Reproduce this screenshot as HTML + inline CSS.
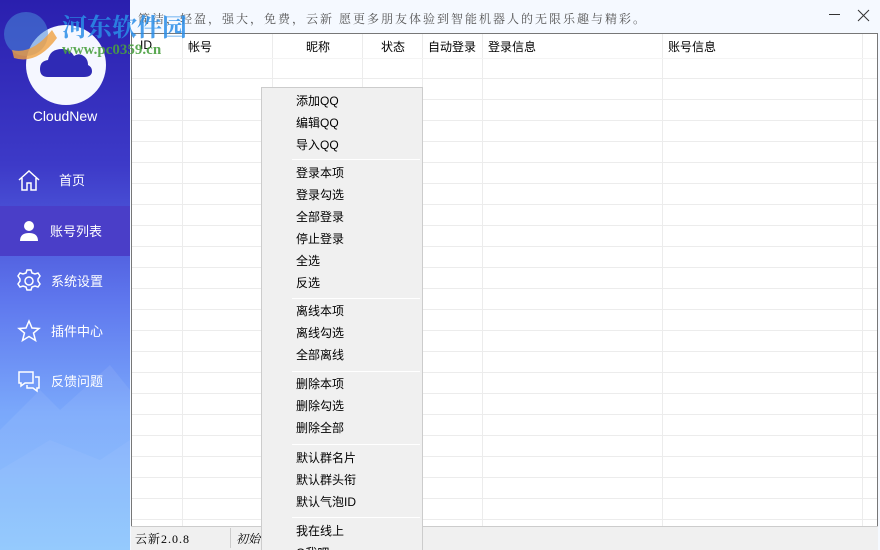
<!DOCTYPE html>
<html style="width:880px;height:550px;overflow:hidden"><head><meta charset="utf-8"><style>
*{margin:0;padding:0;box-sizing:border-box}
body{width:880px;height:550px;overflow:hidden;position:relative;background:#f5f9ff;font-family:"Liberation Sans","Noto Sans CJK SC",sans-serif;font-size:12px;color:#000}
.side{position:absolute;left:0;top:0;width:130px;height:550px;background:linear-gradient(180deg,#2a1fae 0%,#3d3ac8 30%,#5f78ee 55%,#7aa8fb 75%,#88c4fd 100%);overflow:hidden}
.nav{position:absolute;left:0;width:130px;height:50px;color:#fff;font-size:13px}
.nav span{position:absolute;left:52px;top:15px}
.nav svg{position:absolute;left:17px;top:13px}
.a{position:absolute}
.tbl{position:absolute;left:131px;top:33px;width:747px;height:493px;border:1px solid #777;border-bottom:none;background:#fff;overflow:hidden}
.vl{position:absolute;top:0;width:1px;height:493px;background:#ececec}
.hl{position:absolute;left:0;width:747px;height:1px;background:#ececec}
.th{position:absolute;top:4px;font-size:12px}
.menu{position:absolute;left:261px;top:87px;width:162px;height:463px;background:#f0f0f0;border:1px solid #ccc;border-bottom:none;overflow:hidden}
.mi{position:absolute;left:34px;font-size:12px;margin-top:-2px}
.sep{position:absolute;left:30px;width:128px;height:1px;background:#d4d4d4;border-bottom:1px solid #fff}
</style></head><body>
<div class="side">
 <svg class="a" style="left:0;top:350px" width="130" height="200"><path d="M0 80 L40 40 L60 60 L110 15 L130 40 L130 200 L0 200Z" fill="#fff" opacity="0.07"/><path d="M0 120 L50 90 L100 110 L130 90 L130 200 L0 200Z" fill="#fff" opacity="0.05"/></svg>
 <svg class="a" style="left:26px;top:25px" width="80" height="80"><circle cx="40" cy="40" r="40" fill="#f5f7ff"/><path d="M22 52 Q14 52 14 44 Q14 36 22 35 Q24 24 36 24 Q44 24 48 31 Q52 28 56 30 Q62 33 62 40 Q66 42 66 46 Q66 52 58 52Z" fill="#2f2ab5"/></svg>
 <div class="a" style="left:0;width:130px;top:108px;text-align:center;color:#fff;font-size:14px">CloudNew</div>
 <div class="nav" style="top:155px"><svg width="24" height="24" viewBox="0 0 24 24" fill="none" stroke="#fff" stroke-width="1.5"><path d="M2 12 L12 3 L22 12 M5 10 V22 H10 V15 H14 V22 H19 V10"/></svg><span style="left:59px">首页</span></div>
 <div class="nav" style="top:206px;background:#4a3ec8"><svg width="24" height="24" viewBox="0 0 24 24" fill="#fff"><circle cx="12" cy="7" r="5"/><path d="M3 22 Q3 14 12 14 Q21 14 21 22Z"/></svg><span style="left:50px">账号列表</span></div>
 <div class="nav" style="top:256px"><svg width="24" height="24" viewBox="0 0 24 24" fill="none" stroke="#fff" stroke-width="1.5"><circle cx="12" cy="12" r="4"/><path d="M10 1h4l1 3 3 1 3-1 2 3-2 3v2l2 3-2 3-3-1-3 1-1 3h-4l-1-3-3-1-3 1-2-3 2-3v-2L1 7l2-3 3 1 3-1z"/></svg><span style="left:51px">系统设置</span></div>
 <div class="nav" style="top:306px"><svg width="24" height="24" viewBox="0 0 24 24" fill="none" stroke="#fff" stroke-width="1.5"><path d="M12 2 L15 9 L22 9.5 L16.5 14 L18.5 21.5 L12 17.5 L5.5 21.5 L7.5 14 L2 9.5 L9 9Z"/></svg><span style="left:51px">插件中心</span></div>
 <div class="nav" style="top:356px"><svg width="24" height="24" viewBox="0 0 24 24" fill="none" stroke="#fff" stroke-width="1.5"><path d="M2 3 H16 V14 H8 L4 17 V14 H2Z M18 8 H22 V19 H20 V22 L16 19 H10 V16"/></svg><span style="left:51px">反馈问题</span></div>
</div>
<div class="a" style="left:138px;top:10px;font-family:'Liberation Serif','Noto Serif CJK SC',serif;font-size:12px;color:#555;letter-spacing:2px">简洁，轻盈，强大，免费，云新 愿更多朋友体验到智能机器人的无限乐趣与精彩。</div>
<div class="a" style="left:829px;top:14px;width:11px;height:1px;background:#333"></div>
<svg class="a" style="left:857px;top:9px" width="13" height="13"><path d="M1 1L12 12M12 1L1 12" stroke="#333" stroke-width="1"/></svg>
<div class="tbl">
 <div class="vl" style="left:50px"></div><div class="vl" style="left:140px"></div><div class="vl" style="left:230px"></div><div class="vl" style="left:290px"></div><div class="vl" style="left:350px"></div><div class="vl" style="left:530px"></div><div class="vl" style="left:730px"></div>
 <div class="hl" style="top:24px;background:#f4f4f4"></div>
 <div class="hl" style="top:44px"></div><div class="hl" style="top:65px"></div><div class="hl" style="top:86px"></div><div class="hl" style="top:107px"></div><div class="hl" style="top:128px"></div><div class="hl" style="top:149px"></div><div class="hl" style="top:170px"></div><div class="hl" style="top:191px"></div><div class="hl" style="top:212px"></div><div class="hl" style="top:233px"></div><div class="hl" style="top:254px"></div><div class="hl" style="top:275px"></div><div class="hl" style="top:296px"></div><div class="hl" style="top:317px"></div><div class="hl" style="top:338px"></div><div class="hl" style="top:359px"></div><div class="hl" style="top:380px"></div><div class="hl" style="top:401px"></div><div class="hl" style="top:422px"></div><div class="hl" style="top:443px"></div><div class="hl" style="top:464px"></div><div class="hl" style="top:485px"></div>
 <div class="th" style="left:8px">ID</div><div class="th" style="left:56px">帐号</div><div class="th" style="left:174px">昵称</div><div class="th" style="left:249px">状态</div><div class="th" style="left:296px">自动登录</div><div class="th" style="left:356px">登录信息</div><div class="th" style="left:536px">账号信息</div>
</div>
<div class="a" style="left:131px;top:526px;width:747px;height:24px;background:#f0f0f0;border-top:1px solid #ccc"></div>
<div class="a" style="left:230px;top:528px;width:1px;height:20px;background:#ccc"></div>
<div class="a" style="left:135px;top:530px;font-family:'Liberation Serif','Noto Serif CJK SC',serif;font-size:12px;letter-spacing:1px">云新2.0.8</div>
<div class="a" style="left:236px;top:530px;font-family:'Liberation Serif','Noto Serif CJK SC',serif;font-size:12px;font-style:italic">初始</div>
<div class="menu">
 <div class="mi" style="top:6px">添加QQ</div><div class="mi" style="top:28px">编辑QQ</div><div class="mi" style="top:50px">导入QQ</div>
 <div class="sep" style="top:71px"></div>
 <div class="mi" style="top:78px">登录本项</div><div class="mi" style="top:100px">登录勾选</div><div class="mi" style="top:122px">全部登录</div><div class="mi" style="top:144px">停止登录</div><div class="mi" style="top:166px">全选</div><div class="mi" style="top:188px">反选</div>
 <div class="sep" style="top:210px"></div>
 <div class="mi" style="top:216px">离线本项</div><div class="mi" style="top:238px">离线勾选</div><div class="mi" style="top:260px">全部离线</div>
 <div class="sep" style="top:283px"></div>
 <div class="mi" style="top:289px">删除本项</div><div class="mi" style="top:311px">删除勾选</div><div class="mi" style="top:333px">删除全部</div>
 <div class="sep" style="top:356px"></div>
 <div class="mi" style="top:363px">默认群名片</div><div class="mi" style="top:385px">默认群头衔</div><div class="mi" style="top:407px">默认气泡ID</div>
 <div class="sep" style="top:429px"></div>
 <div class="mi" style="top:436px">我在线上</div><div class="mi" style="top:458px">Q我吧</div>
</div>
<svg class="a" style="left:2px;top:10px" width="55" height="55"><circle cx="24" cy="24" r="22" fill="#4a8ad8" opacity="0.55"/><path d="M10 40 Q30 45 50 20 L55 28 Q35 55 12 48Z" fill="#f0a040" opacity="0.8"/></svg>
<div class="a" style="left:62px;top:8px;font-size:25px;font-weight:bold;color:#2a8ee8;opacity:0.85;font-family:'Liberation Serif','Noto Serif CJK SC',serif">河东软件园</div>
<div class="a" style="left:62px;top:42px;font-size:15px;font-weight:bold;color:#4aa040;opacity:0.9;font-family:'Liberation Serif',serif">www.pc0359.cn</div>
</body></html>
